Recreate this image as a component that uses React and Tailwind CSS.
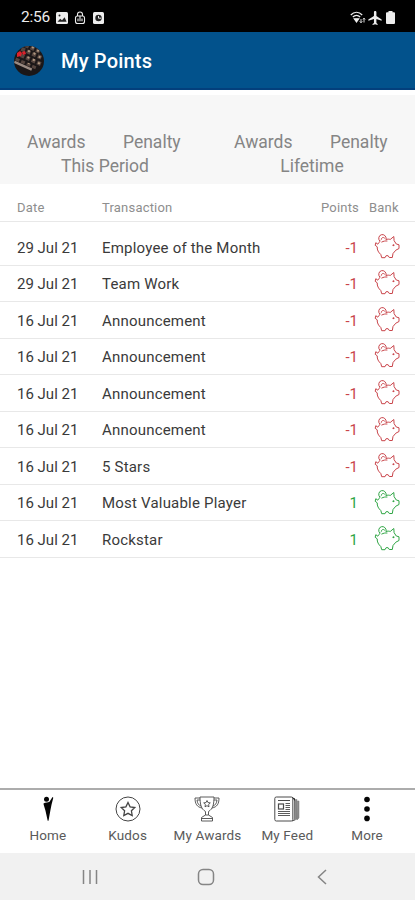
import React from "react";

const transactions = [
  { date: "29 Jul 21", name: "Employee of the Month", points: -1 },
  { date: "29 Jul 21", name: "Team Work", points: -1 },
  { date: "16 Jul 21", name: "Announcement", points: -1 },
  { date: "16 Jul 21", name: "Announcement", points: -1 },
  { date: "16 Jul 21", name: "Announcement", points: -1 },
  { date: "16 Jul 21", name: "Announcement", points: -1 },
  { date: "16 Jul 21", name: "5 Stars", points: -1 },
  { date: "16 Jul 21", name: "Most Valuable Player", points: 1 },
  { date: "16 Jul 21", name: "Rockstar", points: 1 },
];

const App = () => {
  return (
    <div className="h-[900px] w-full bg-white flex flex-col overflow-hidden font-['Roboto',sans-serif]">
      <StatusBar />
      <header className="h-[58px] shrink-0 bg-[#02528c] border-b-2 border-[#033f7c] flex items-center pl-3.5 pt-0.5">
        <Avatar />
        <h1 className="ml-[17px] text-xl font-medium text-white tracking-[0.2px]">My Points</h1>
      </header>

      {/* Totals */}
      <div className="mt-[5px] h-[89px] shrink-0 bg-[#f7f7f7] pt-[35px] flex text-[17.5px] leading-[24px] text-[#858585]">
        <Summary label="This Period" className="pl-[27px] w-[207px]" />
        <Summary label="Lifetime" className="pl-[27px] w-[208px]" />
      </div>

      {/* Transactions */}
      <div className="h-[38px] shrink-0 border-b border-[#e8e8e8] flex items-center pt-2.5 text-[13px] tracking-[0.2px] text-[#8e8e8e]">
        <span className="pl-[17px] w-[102px]">Date</span>
        <span className="flex-1">Transaction</span>
        <span className="w-[60px] text-right">Points</span>
        <span className="w-[56px] pl-[10px]">Bank</span>
      </div>
      <div className="pt-[7px] flex-1">
        {transactions.map((item, i) => (
          <Transaction key={i} {...item} />
        ))}
      </div>

      <TabBar />
      <SystemNav />
    </div>
  );
};

const StatusBar = () => {
  return (
    <div className="h-8 shrink-0 bg-black text-[#ededed] flex items-center pl-[21px] pr-5 pt-[3px]">
      <span className="text-[15.5px] tracking-[-0.2px] w-[35px]">2:56</span>
      <svg className="w-3 h-3" viewBox="0 0 12 12">
        <rect width="12" height="12" rx="1.5" fill="currentColor" />
        <path d="M1.5 9.8 4.2 6.8 6 8.3 8.6 5.3 10.6 9.8Z" fill="#222" />
        <circle cx="3.5" cy="3.5" r="1" fill="#222" />
      </svg>
      <svg className="w-3 h-3.5 ml-1.5" viewBox="0 0 12 14" fill="none" stroke="currentColor" strokeWidth="1.1">
        <path d="M3.5 5V3.5a2.5 2.5 0 0 1 5 0V5" />
        <rect x="1.5" y="5" width="9" height="7.5" rx="2" />
        <path d="M6 4.8v5.4M4 7.5v2.7M8 7.5v2.7" />
      </svg>
      <svg className="w-[11px] h-3 ml-[7px]" viewBox="0 0 11 12">
        <rect width="11" height="12" rx="1.5" fill="currentColor" />
        <circle cx="5.5" cy="6" r="3.2" fill="#222" />
        <path d="M5.5 4v2.2H8" stroke="#ededed" fill="none" />
      </svg>
      <span className="flex-1" />
      <svg className="w-4 h-[13px]" viewBox="0 0 16 13" fill="none" stroke="currentColor" strokeWidth="1.2">
        <path d="M.8 4C4 .3 9 .3 12.2 4M2.8 6c2.2-2.3 5.2-2.3 7.4 0" />
        <path d="M4.3 7.8h4.4L6.5 11z" fill="currentColor" />
        <path d="M11 11.5V8M9.7 10.3 11 11.8l1.3-1.5M14 7v4.5M12.9 8.5 14 7.2l1.1 1.3" strokeWidth=".9" />
      </svg>
      <svg className="w-[14px] h-[14px] ml-0.5" viewBox="2 2 20 20" fill="currentColor">
        <path d="M21.5 16v-2L14 9V3.5C14 2.7 13.2 2 12.2 2s-1.7.7-1.700 1.5V9L2.500 14v2l8-2.500V19l-2 1.500V22l3.700-1 3.500 1v-1.500L14 19v-5.500z" />
      </svg>
      <svg className="w-[9px] h-[13px] ml-1" viewBox="0 0 9 13" fill="currentColor">
        <path d="M1 1.3h1.5V0h4v1.3H8a1 1 0 0 1 1 1V12a1 1 0 0 1-1 1H1a1 1 0 0 1-1-1V2.3a1 1 0 0 1 1-1Z" />
      </svg>
    </div>
  );
};

const Avatar = () => {
  return (
    <svg className="w-[30px] h-[30px] rounded-full" viewBox="0 0 30 30">
      <rect width="30" height="30" fill="#1b1718" />
      <g transform="rotate(24 15 15)">
        <path
          d="M5 0h4v4H5zM11 0h4v4h-4zM17 0h4v4h-4zM3 5h4v4H3zM9 5h4v4H9zM15 5h4v4h-4zM21 5h4v4h-4zM5 11h4v4H5zM11 11h4v4h-4zM17 11h4v4h-4zM23 11h4v4h-4zM2 17h4v3H2zM8 17h4v3H8zM14 17h4v3h-4zM20 17h4v3h-4z"
          fill="#55453f"
        />
        <path d="M12 0h2v2h-2zM18 1h2v2h-2zM10 5h2v2h-2zM16 5h2v2h-2zM22 6h2v2h-2zM12 11h2v2h-2zM18 11h2v2h-2zM24 12h2v2h-2zM15 17h2v1h-2z" fill="#b09880" />
        <path d="M2 20.500h19V23H2z" fill="#9a8a82" />
      </g>
      <path d="M3 7l3-2 2 2-1 3-4 1zM8 6l3-1 1 3-3 1z" fill="#dc222b" />
    </svg>
  );
};

const Summary = ({ label, className }) => {
  return (
    <div className={className}>
      <div className="flex">
        <span className="w-24">Awards</span>
        <span>Penalty</span>
      </div>
      <div className="w-[156px] text-center">{label}</div>
    </div>
  );
};

const Transaction = ({ date, name, points }) => {
  return (
    <div className="h-[36.55px] border-b border-[#e8e8e8] flex items-center text-[15px] text-[#3a3a3a]">
      <span className="pl-[17px] w-[102px] pt-0.5">{date}</span>
      <span className="flex-1 pt-0.5 tracking-[0.2px]">{name}</span>
      <div className={points < 0 ? "flex items-center text-[#c9444a]" : "flex items-center text-[#2fa544]"}>
        <span className="w-10 text-right pt-0.5">{points}</span>
        <PiggyBank />
      </div>
    </div>
  );
};

const PiggyBank = () => {
  return (
    <svg
      className="w-[26px] h-[26px] ml-4 mr-[15px]"
      viewBox="0 0 26 26"
      fill="none"
      stroke="currentColor"
      strokeWidth="1"
      strokeLinejoin="round"
      strokeLinecap="round"
    >
      <path d="M12 5.5c1.800-.6 3-.4 4.200 0L19.800 2.500l.3 4.200L22.300 10l2.700.8v3.700l-3.200 1.700-2.800 3.300-.7 4h-3l-1.200-1.800h-2L11 23.700H7.700l-.9-3.200C4.500 18.500 3 16 3.200 12.800L1.200 11.300l.6-2.600 2 1.500C4.500 8.800 5.200 8 6.200 7.200" />
      <path d="M5.500 6.800a3.800 3.800 0 1 1 6.700-2M7.300 5.300a1.900 1.900 0 0 1 3.200-1.300M7.800 8c1.800-.9 3.400-1.200 5.200-1" />
      <circle cx="19.300" cy="11.200" r="0.500" fill="currentColor" />
    </svg>
  );
};

const TabBar = () => {
  return (
    <nav className="h-[65px] shrink-0 border-t-2 border-[#acacac] px-2 grid grid-cols-5 text-[13.5px] tracking-[0.15px] text-[#5a5a5a]">
      <Tab label="Home">
        <svg className="w-7 h-7" viewBox="0 0 28 28" fill="#050505">
          <circle cx="12.500" cy="4.300" r="2.500" />
          <path d="M9.500 8.500c2-1.300 4.500-1 6-1.800L18.500 2l.8.700-1.800 7-1 5-2 11h-.8l-2.200-10-1.800-6z" />
        </svg>
      </Tab>
      <Tab label="Kudos">
        <svg className="w-7 h-7" viewBox="0 0 28 28" fill="none" stroke="#444">
          <circle cx="14" cy="14" r="12" />
          <path d="m14 7.500 2.100 4.300 4.700.7-3.400 3.300.8 4.700-4.200-2.200-4.200 2.200.8-4.700-3.400-3.300 4.700-.7z" strokeWidth="1.300" />
        </svg>
      </Tab>
      <Tab label="My Awards">
        <svg className="w-7 h-7" viewBox="0 0 28 28" fill="none" stroke="#4a4a4a" strokeWidth="0.9">
          <path d="M7 2h14c0 7-1 12-5.500 14.500v3.500l4 2.500V26h-11v-3.500l4-2.500v-3.500C8 14 7 9 7 2Z" />
          <path d="M7 3H2c0 6 2 9 7 10M7.200 5H4c.4 3.500 1.800 5.300 4 6M21 3h5c0 6-2 9-7 10M20.800 5H24c-.4 3.500-1.800 5.300-4 6M8.500 23.500h11M12.500 20h3" />
          <path d="m14 5.500 1 2.100 2.300.3-1.700 1.600.4 2.300-2-1.100-2 1.100.4-2.300-1.700-1.600 2.300-.3z" />
        </svg>
      </Tab>
      <Tab label="My Feed">
        <svg className="w-7 h-7" viewBox="0 0 28 28" fill="none" stroke="#4a4a4a">
          <rect x="1.800" y="2" width="18" height="24" rx="1.500" />
          <path d="M19 2.500l2.500 2V25L19 26" />
          <path d="M21.500 4.500H24V24l-3 1.500zM24.500 6H26v17l-2 2z" fill="#8b8b8b" stroke="#777" strokeWidth=".5" />
          <path d="M19 2l3 1.500V6z" fill="#222" stroke="none" />
          <path d="M5 5.500h12" />
          <rect x="5.500" y="9" width="5" height="5" strokeWidth="1.200" />
          <path d="M12.500 8.500H17M12.500 10.500H17M12.500 12.500H17M12.500 14.500H17M5 16.500h12M5 18.500h12M5 20.500h12" strokeWidth=".9" />
        </svg>
      </Tab>
      <Tab label="More">
        <svg className="w-7 h-7" viewBox="0 0 28 28" fill="#050505">
          <circle cx="14" cy="4.500" r="2.800" />
          <circle cx="14" cy="14" r="2.800" />
          <circle cx="14" cy="23.400" r="2.800" />
        </svg>
      </Tab>
    </nav>
  );
};

const Tab = ({ label, children }) => {
  return (
    <div className="flex flex-col items-center pt-[5px] whitespace-nowrap">
      {children}
      <span className="mt-0.5 leading-5">{label}</span>
    </div>
  );
};

const SystemNav = () => {
  return (
    <div className="h-[47px] shrink-0 bg-[#f1f1f1] flex items-center pl-[82px] text-[#858585]">
      <svg className="w-4 h-4" viewBox="0 0 16 16" stroke="currentColor" strokeWidth="1.5">
        <path d="M1.500 1v14M8 1v14M14.500 1v14" />
      </svg>
      <svg className="w-[18px] h-[18px] ml-[99px]" viewBox="0 0 18 18" fill="none" stroke="currentColor" strokeWidth="1.5">
        <rect x="1.500" y="1.500" width="15" height="15" rx="4.500" />
      </svg>
      <svg className="w-4 h-4 ml-[99px]" viewBox="0 0 16 16" fill="none" stroke="currentColor" strokeWidth="1.5">
        <path d="M12 1 4.500 8l7.500 7" />
      </svg>
    </div>
  );
};

export default App;
